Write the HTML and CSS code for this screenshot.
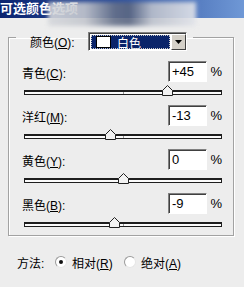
FILE: index.html
```html
<!DOCTYPE html>
<html lang="zh-CN">
<head>
  <meta charset="UTF-8">
  <meta name="viewport" content="width=device-width, initial-scale=1.0">
  <title>可选颜色选项</title>
  <link rel="stylesheet" href="styles.css">
</head>
<body>

<div class="titlebar">
  <span class="title">可选颜色选项</span>
  <div class="smudge"></div>
</div>

<div class="dialog">
  <fieldset class="group">
    <legend class="group-head">
      <span class="head-label">颜色(<u>O</u>):</span>
      <div class="combo">
        <div class="combo-value">
          <div class="swatch"></div>
          <span class="combo-text">白色</span>
        </div>
        <div class="combo-btn">
          <svg width="7" height="4" viewBox="0 0 7 4"><polygon points="0,0 7,0 3.5,4" fill="#000"/></svg>
        </div>
      </div>
    </legend>

    <div class="adj">
      <div class="adj-row">
        <span class="adj-label">青色(<u>C</u>):</span>
        <div class="num">+45</div>
        <span class="pct">%</span>
      </div>
      <div class="track"><span class="tick"></span>
        <svg class="thumb" style="left: 72.5%" width="11" height="11" viewBox="0 0 11 11"><polygon points="5.5,0.5 10.5,5.5 10.5,10.5 0.5,10.5 0.5,5.5" fill="#f2f2f2" stroke="#222"/></svg>
      </div>
    </div>

    <div class="adj">
      <div class="adj-row">
        <span class="adj-label">洋红(<u>M</u>):</span>
        <div class="num">-13</div>
        <span class="pct">%</span>
      </div>
      <div class="track"><span class="tick"></span>
        <svg class="thumb" style="left: 43.5%" width="11" height="11" viewBox="0 0 11 11"><polygon points="5.5,0.5 10.5,5.5 10.5,10.5 0.5,10.5 0.5,5.5" fill="#f2f2f2" stroke="#222"/></svg>
      </div>
    </div>

    <div class="adj">
      <div class="adj-row">
        <span class="adj-label">黄色(<u>Y</u>):</span>
        <div class="num">0</div>
        <span class="pct">%</span>
      </div>
      <div class="track"><span class="tick"></span>
        <svg class="thumb" style="left: 50%" width="11" height="11" viewBox="0 0 11 11"><polygon points="5.5,0.5 10.5,5.5 10.5,10.5 0.5,10.5 0.5,5.5" fill="#f2f2f2" stroke="#222"/></svg>
      </div>
    </div>

    <div class="adj">
      <div class="adj-row">
        <span class="adj-label">黑色(<u>B</u>):</span>
        <div class="num">-9</div>
        <span class="pct">%</span>
      </div>
      <div class="track"><span class="tick"></span>
        <svg class="thumb" style="left: 45.5%" width="11" height="11" viewBox="0 0 11 11"><polygon points="5.5,0.5 10.5,5.5 10.5,10.5 0.5,10.5 0.5,5.5" fill="#f2f2f2" stroke="#222"/></svg>
      </div>
    </div>
  </fieldset>

  <div class="method">
    <span class="method-label">方法:</span>
    <span class="radio checked"></span>
    <span class="radio-text">相对(<u>R</u>)</span>
    <span class="radio"></span>
    <span class="radio-text">绝对(<u>A</u>)</span>
  </div>
</div>

</body>
</html>
```

FILE: styles.css
```css
body {
  margin: 0;
  width: 244px;
  height: 287px;
  overflow: hidden;
  background-color: #ededed;
  font-family: "Liberation Sans", "Noto Sans CJK SC", sans-serif;
  font-size: 12px;
  color: #000;
}
u {
  text-decoration: underline;
  text-underline-offset: 1px;
}
.titlebar {
  position: relative;
  height: 18px;
  background: linear-gradient(90deg, #0b2470 0%, #2a4c9a 45%, #6f98d6 100%);
}
.title {
  display: block;
  padding-top: 1px;
  color: #fff;
  font-weight: bold;
  font-size: 13px;
  line-height: 16px;
  white-space: nowrap;
}
.smudge {
  position: absolute;
  left: 48px;
  top: 2px;
  width: 148px;
  height: 24px;
  background: linear-gradient(90deg, #d6d8dc 0%, #c4c7ce 25%, #66718a 45%, #5a6682 55%, #bcc1cc 70%, #e2e4ea 100%);
  filter: blur(2px);
  opacity: 0.9;
}
.dialog {
  padding: 0 10px 0 8px;
}
.group {
  margin: 6px 0 0 0;
  padding: 0 0 8px 0;
  border: 1px solid #a2a2a2;
  box-shadow: inset 1px 1px 0 #fff, 1px 1px 0 #fff;
}
.group-head {
  display: flex;
  align-items: center;
  margin-left: 7px;
  padding: 8px 6px 0 14px;
}
.head-label {
  width: 58px;
}
.combo {
  display: flex;
  width: 99px;
  height: 19px;
  box-sizing: border-box;
  border: 1px solid;
  border-color: #808080 #fff #fff #808080;
  box-shadow: inset 1px 1px 0 #404040;
  background: #fff;
  padding: 1px 0 0 1px;
}
.combo-value {
  flex: 1;
  display: flex;
  align-items: center;
  margin: 1px;
  padding-left: 5px;
  background: #0a246a;
  outline: 1px dotted #c8c8c8;
  outline-offset: -1px;
}
.swatch {
  flex: 0 0 auto;
  width: 13px;
  height: 10px;
  box-sizing: content-box;
  background: #fff;
  border: 1px solid #000;
}
.combo-text {
  margin-left: 6px;
  color: #fff;
}
.combo-btn {
  display: flex;
  align-items: center;
  justify-content: center;
  width: 15px;
  background: #d4d0c8;
  box-sizing: border-box;
  border: 1px solid;
  border-color: #fff #404040 #404040 #fff;
}
.adj {
  padding: 0 11px 0 13px;
}
.adj:first-of-type {
  padding-top: 10px;
}
.adj-row {
  display: flex;
  align-items: center;
  height: 21px;
}
.adj-label {
  flex: 1;
  padding-top: 1px;
}
.num {
  width: 39px;
  height: 21px;
  box-sizing: border-box;
  border: 1px solid;
  border-color: #808080 #fff #fff #808080;
  box-shadow: inset 1px 1px 0 #404040;
  background: #fff;
  padding: 2px 0 0 3px;
  font-size: 13px;
  line-height: 16px;
}
.pct {
  width: 15px;
  text-align: right;
  font-size: 13px;
}
.track {
  position: relative;
  height: 5px;
  box-sizing: border-box;
  margin: 8px 0 10px 2px;
  border: 1px solid #1e1e1e;
  border-top-width: 2px;
  background: #fbfbfb;
}
.adj:last-of-type .track {
  margin-bottom: 0;
}
.tick {
  position: absolute;
  left: 50%;
  top: 0;
  width: 1px;
  height: 2px;
  background: #9a9a9a;
}
.thumb {
  position: absolute;
  top: -7px;
  margin-left: -5px;
}
.method {
  display: flex;
  align-items: center;
  height: 16px;
  margin-top: 18px;
  padding-left: 9px;
}
.method-label {
  width: 38px;
}
.radio {
  position: relative;
  width: 12px;
  height: 12px;
  box-sizing: border-box;
  border-radius: 50%;
  border: 1px solid;
  border-color: #9a9a9a #e6e6e6 #e6e6e6 #9a9a9a;
  background: #fff;
}
.radio.checked::after {
  content: "";
  position: absolute;
  left: 3px;
  top: 3px;
  width: 4px;
  height: 4px;
  border-radius: 50%;
  background: #111;
}
.radio-text {
  margin-left: 5px;
  width: 52px;
}
```
